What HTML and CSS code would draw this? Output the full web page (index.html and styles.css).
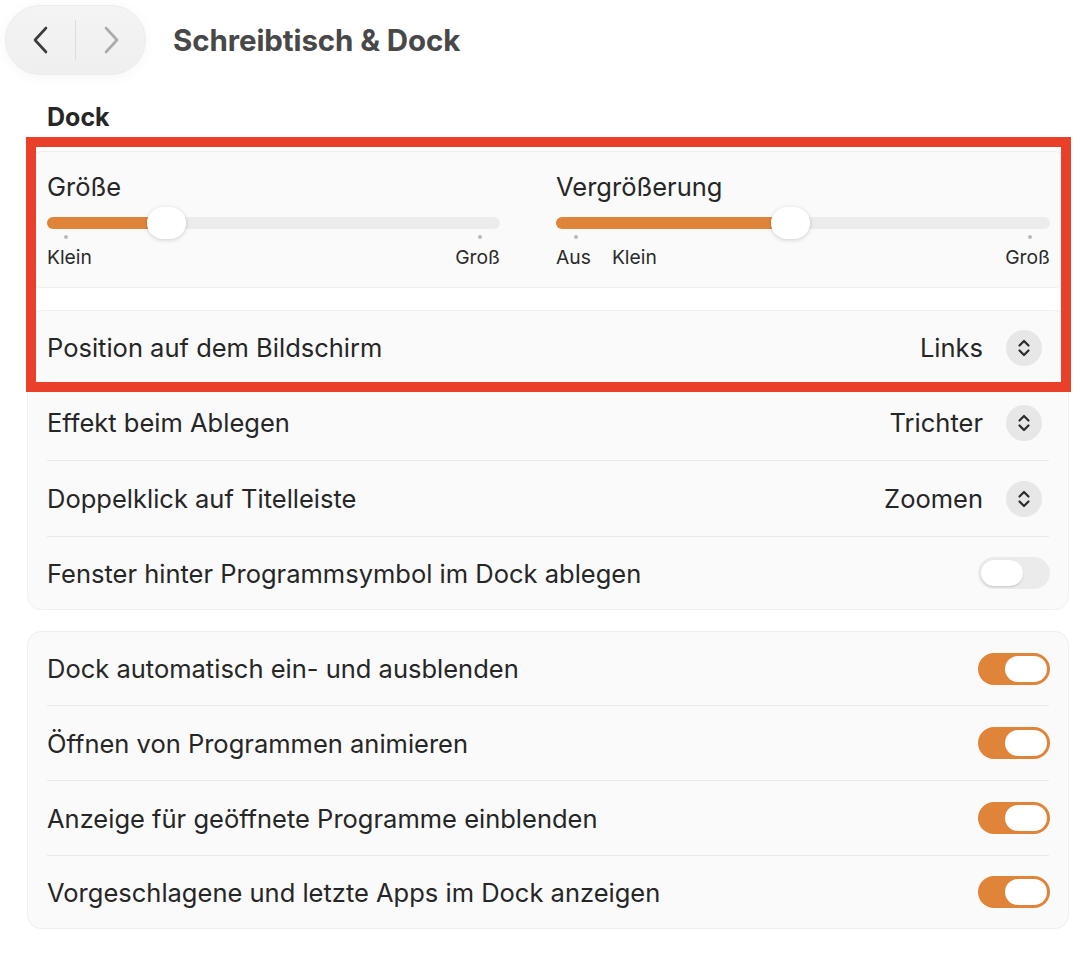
FILE: index.html
```html
<!DOCTYPE html>
<html lang="de">
<head>
  <meta charset="UTF-8" />
  <meta name="viewport" content="width=device-width, initial-scale=1.0" />
  <title>Schreibtisch &amp; Dock</title>
  <link rel="stylesheet" href="styles.css">
</head>
<body>
  <div class="page">
    <header class="topbar">
      <div class="nav-pill">
        <button class="nav-btn">
          <svg width="18" height="30" viewBox="0 0 18 30"><path d="M14 3 L3 15 L14 27" fill="none" stroke="#3c3c3c" stroke-width="2.6" stroke-linecap="round" stroke-linejoin="round"/></svg>
        </button>
        <span class="nav-sep"></span>
        <button class="nav-btn">
          <svg width="18" height="30" viewBox="0 0 18 30"><path d="M4 3 L15 15 L4 27" fill="none" stroke="#ababab" stroke-width="2.6" stroke-linecap="round" stroke-linejoin="round"/></svg>
        </button>
      </div>
      <h1>Schreibtisch &amp; Dock</h1>
    </header>

    <h2 class="section-title">Dock</h2>

    <section class="card slider-card">
      <div class="slider-group">
        <div class="slider-label">Größe</div>
        <div class="track">
          <div class="fill" style="width: 120px"></div>
          <div class="thumb" style="left: 100px"></div>
        </div>
        <div class="ticks">
          <span class="tick" style="left: 17px"></span>
          <span class="tick" style="left: 431px"></span>
        </div>
        <div class="scale">
          <span>Klein</span>
          <span class="spacer"></span>
          <span>Groß</span>
        </div>
      </div>
      <div class="slider-group">
        <div class="slider-label">Vergrößerung</div>
        <div class="track">
          <div class="fill" style="width: 240px"></div>
          <div class="thumb" style="left: 215px"></div>
        </div>
        <div class="ticks">
          <span class="tick" style="left: 18px"></span>
          <span class="tick" style="left: 472px"></span>
        </div>
        <div class="scale">
          <span>Aus</span>
          <span class="scale-second">Klein</span>
          <span class="spacer"></span>
          <span>Groß</span>
        </div>
      </div>
    </section>

    <section class="card list-card">
      <div class="row">
        <span class="row-label">Position auf dem Bildschirm</span>
        <span class="popup">Links <span class="stepper"><svg width="16" height="20" viewBox="0 0 16 20"><path d="M3.5 7.5 L8 3 L12.5 7.5 M3.5 12.5 L8 17 L12.5 12.5" fill="none" stroke="#2b2b2b" stroke-width="2.2" stroke-linecap="round" stroke-linejoin="round"/></svg></span></span>
      </div>
      <div class="row">
        <span class="row-label">Effekt beim Ablegen</span>
        <span class="popup">Trichter <span class="stepper"><svg width="16" height="20" viewBox="0 0 16 20"><path d="M3.5 7.5 L8 3 L12.5 7.5 M3.5 12.5 L8 17 L12.5 12.5" fill="none" stroke="#2b2b2b" stroke-width="2.2" stroke-linecap="round" stroke-linejoin="round"/></svg></span></span>
      </div>
      <div class="row">
        <span class="row-label">Doppelklick auf Titelleiste</span>
        <span class="popup">Zoomen <span class="stepper"><svg width="16" height="20" viewBox="0 0 16 20"><path d="M3.5 7.5 L8 3 L12.5 7.5 M3.5 12.5 L8 17 L12.5 12.5" fill="none" stroke="#2b2b2b" stroke-width="2.2" stroke-linecap="round" stroke-linejoin="round"/></svg></span></span>
      </div>
      <div class="row">
        <span class="row-label">Fenster hinter Programmsymbol im Dock ablegen</span>
        <span class="switch"><span class="knob"></span></span>
      </div>
    </section>

    <section class="card list-card compact">
      <div class="row">
        <span class="row-label">Dock automatisch ein- und ausblenden</span>
        <span class="switch on"><span class="knob"></span></span>
      </div>
      <div class="row">
        <span class="row-label">Öffnen von Programmen animieren</span>
        <span class="switch on"><span class="knob"></span></span>
      </div>
      <div class="row">
        <span class="row-label">Anzeige für geöffnete Programme einblenden</span>
        <span class="switch on"><span class="knob"></span></span>
      </div>
      <div class="row">
        <span class="row-label">Vorgeschlagene und letzte Apps im Dock anzeigen</span>
        <span class="switch on"><span class="knob"></span></span>
      </div>
    </section>

    <div class="highlight"></div>
  </div>
</body>
</html>
```

FILE: styles.css
```css
body {
  margin: 0;
  background: #ffffff;
  font-family: Inter, "Noto Sans", sans-serif;
  color: #262626;
}
.page {
  position: relative;
  padding: 5px 10px 0 27px;
}
.topbar {
  display: flex;
  align-items: center;
  gap: 27px;
  margin-left: -22px;
  height: 70px;
}
.nav-pill {
  display: flex;
  align-items: center;
  width: 141px;
  height: 70px;
  border-radius: 35px;
  background: linear-gradient(#f4f4f4, #efefef);
  border: 1px solid #ececec;
  box-sizing: border-box;
  box-shadow: 0 2px 14px rgba(0, 0, 0, 0.04);
}
.nav-btn {
  flex: 1;
  background: none;
  border: none;
  padding: 0;
  height: 100%;
  display: flex;
  align-items: center;
  justify-content: center;
}
.nav-sep {
  width: 1px;
  height: 40px;
  background: #dcdcdc;
}
h1 {
  margin: 0;
  font-size: 29.5px;
  font-weight: 700;
  color: #484848;
  letter-spacing: -0.1px;
}
.section-title {
  margin: 26px 0 0 20px;
  font-size: 25px;
  font-weight: 700;
  color: #262626;
  line-height: 32px;
}
.card {
  background: #fafafa;
  border: 1px solid #efefef;
  border-radius: 14px;
  width: 1042px;
  box-sizing: border-box;
}
.slider-card {
  margin-top: 18px;
  height: 137px;
  display: grid;
  grid-template-columns: 453px 494px;
  gap: 56px;
  padding: 20px 19px 0 19px;
}
.slider-label {
  font-size: 25.5px;
  line-height: 30px;
}
.track {
  position: relative;
  height: 12px;
  margin-top: 15px;
  border-radius: 6px;
  background: #ececec;
}
.fill {
  height: 12px;
  border-radius: 6px 0 0 6px;
  background: #e0843a;
}
.thumb {
  position: absolute;
  top: -10px;
  width: 39px;
  height: 32px;
  border-radius: 16px;
  background: #ffffff;
  box-shadow: 0 1px 4px rgba(0, 0, 0, 0.18);
}
.ticks {
  position: relative;
  height: 16px;
}
.tick {
  position: absolute;
  top: 6px;
  width: 4px;
  height: 4px;
  border-radius: 50%;
  background: #b9b9b9;
}
.scale {
  display: flex;
  font-size: 19.3px;
  line-height: 24px;
  color: #2a2a2a;
}
.scale-second {
  margin-left: 21px;
}
.spacer {
  flex: 1;
}
.list-card {
  margin-top: 22px;
  padding: 0 19px;
}
.row {
  display: flex;
  align-items: center;
  height: 75px;
  border-top: 1px solid #e9e9e9;
}
.row:first-child {
  border-top: none;
  height: 73px;
}
.row:last-child {
  height: 72px;
}
.compact {
  margin-top: 21px;
}
.compact .row {
  height: 74px;
}
.compact .row:first-child {
  height: 73px;
}
.compact .row:last-child {
  height: 72px;
}
.row-label {
  flex: 1;
  font-size: 25.5px;
}
.popup {
  display: flex;
  align-items: center;
  gap: 23px;
  font-size: 25.5px;
  color: #262626;
}
.stepper {
  width: 36px;
  height: 36px;
  border-radius: 50%;
  background: #e7e7e7;
  display: flex;
  align-items: center;
  justify-content: center;
  margin-right: 7px;
}
.switch {
  position: relative;
  width: 72px;
  height: 32px;
  margin-right: -1px;
  border-radius: 16px;
  background: #ebebeb;
  box-sizing: border-box;
}
.switch .knob {
  position: absolute;
  top: 3px;
  left: 3px;
  width: 42px;
  height: 26px;
  border-radius: 13px;
  background: #ffffff;
  box-shadow: 0 1px 2px rgba(0, 0, 0, 0.15);
}
.switch.on {
  background: #e0843a;
}
.switch.on .knob {
  left: auto;
  right: 3px;
  box-shadow: none;
}
.highlight {
  position: absolute;
  left: 26px;
  top: 137px;
  width: 1045px;
  height: 255px;
  box-sizing: border-box;
  border: 10px solid #ea3f28;
  pointer-events: none;
}
```
